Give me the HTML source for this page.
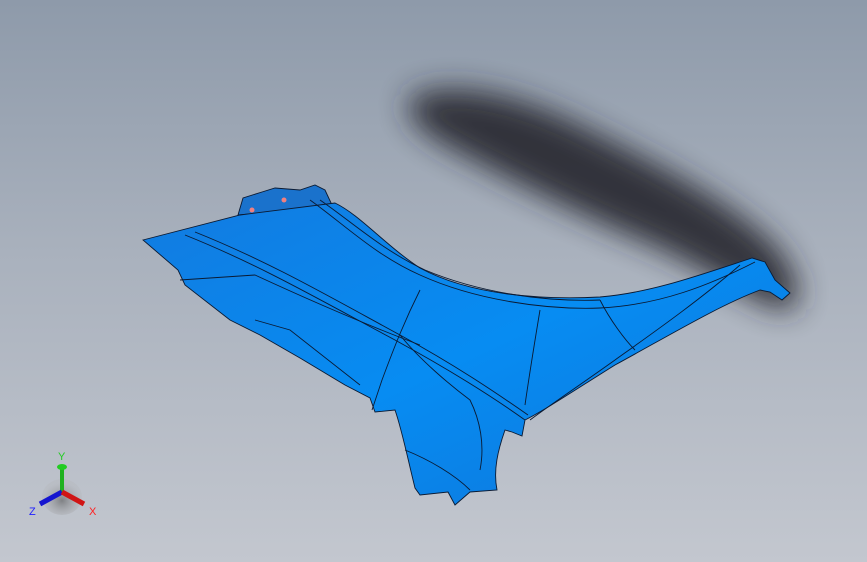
<!DOCTYPE html>
<html><head><style>
html,body{margin:0;padding:0;width:867px;height:562px;overflow:hidden;background:linear-gradient(#8e9aaa 0%,#a9b1bd 45%,#c3c7cf 100%);}
svg{position:absolute;left:0;top:0}
</style></head><body>
<svg width="867" height="562" viewBox="0 0 867 562">
<defs>
<filter id="b" x="-50%" y="-50%" width="200%" height="200%"><feGaussianBlur stdDeviation="15"/></filter>
<linearGradient id="f" x1="0" y1="0" x2="1" y2="1">
<stop offset="0" stop-color="#127be0"/><stop offset="0.5" stop-color="#078cf2"/><stop offset="1" stop-color="#0f74d8"/></linearGradient>
<radialGradient id="ax" cx="0.5" cy="0.6" r="0.5"><stop offset="0" stop-color="#555"/><stop offset="1" stop-color="#aaa" stop-opacity="0.3"/></radialGradient>
</defs>
<path d="M415,95 C455,80 520,95 580,125 C650,160 730,200 775,245 C805,280 805,315 780,310 C740,295 700,265 640,240 C570,210 500,175 445,145 C410,125 400,105 415,95Z" fill="#25282d" filter="url(#b)" opacity="0.9"/>
<g stroke="#0a1a33" stroke-width="0.9">
<path d="M238,215 L243,198 L262,192 L275,188 L300,190 L315,185 L325,190 L332,205 L300,210Z" fill="#1a72cc"/>
<path d="M143,240 L240,215 L335,203 C360,215 385,245 420,268 C470,295 540,300 600,297 C650,293 700,275 752,258 L765,262 L775,280 L790,293 L782,300 L770,292 L760,290 C720,305 670,335 615,365 C575,390 545,410 525,420 L522,436 L512,432 L505,430 C498,450 493,470 497,490 L470,492 L455,505 L448,492 L420,495 L415,488 C408,460 402,430 395,410 L375,412 L370,398 L345,385 L300,358 L260,335 L230,320 L185,285 L178,270Z" fill="url(#f)"/>
<g fill="none">
<path d="M185,235 C260,265 320,300 395,340 C450,370 490,395 525,420"/>
<path d="M195,232 C270,262 330,297 400,335 C455,365 495,392 528,415"/>
<path d="M180,280 L255,275 C320,305 380,330 420,345"/>
<path d="M310,200 C345,225 375,255 420,275 C475,300 545,310 600,308 C660,305 710,285 755,262"/>
<path d="M320,200 C352,222 382,250 425,270 C480,293 545,302 600,300"/>
<path d="M420,290 C405,320 395,345 382,380 L372,410"/>
<path d="M540,310 C535,340 530,370 525,405"/>
<path d="M600,300 C610,320 625,340 635,350"/>
<path d="M740,265 C700,300 650,335 615,360 C580,385 550,405 530,420"/>
<path d="M400,335 C420,360 450,385 470,400 C480,420 485,445 480,470"/>
<path d="M405,450 C430,460 455,475 470,490"/>
<path d="M255,320 L290,330 L360,385"/>
</g>
</g>
<circle cx="252" cy="210" r="2.5" fill="#f08080"/><circle cx="284" cy="200" r="2.5" fill="#f08080"/>
<g transform="translate(62,492)">
<ellipse cx="0" cy="5" rx="20" ry="18" fill="url(#ax)" opacity="0.6"/>
<line x1="0" y1="0" x2="0" y2="-25" stroke="#1fb11f" stroke-width="4"/>
<ellipse cx="0" cy="-25" rx="5" ry="3" fill="#22cc22"/>
<line x1="0" y1="0" x2="-22" y2="12" stroke="#1515d0" stroke-width="5"/>
<line x1="0" y1="0" x2="22" y2="12" stroke="#d01515" stroke-width="5"/>
<text x="-4" y="-32" font-family="Liberation Sans,sans-serif" font-size="11" fill="#22cc22">Y</text>
<text x="-33" y="23" font-family="Liberation Sans,sans-serif" font-size="11" fill="#2020ff">Z</text>
<text x="27" y="23" font-family="Liberation Sans,sans-serif" font-size="11" fill="#ff2020">X</text>
</g>
</svg>
</body></html>
